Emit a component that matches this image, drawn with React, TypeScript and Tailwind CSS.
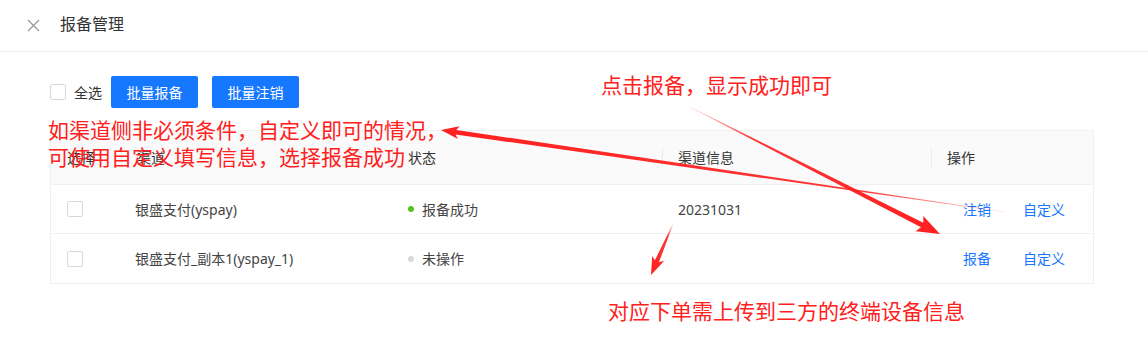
import React from "react";

type Pt = [number, number];

function arrowPoints(tail: Pt, tip: Pt, tw: number, sw: number, hl: number, hw: number) {
  const dx = tip[0] - tail[0];
  const dy = tip[1] - tail[1];
  const len = Math.hypot(dx, dy);
  const ux = dx / len;
  const uy = dy / len;
  const nx = -uy;
  const ny = ux;
  const bx = tip[0] - ux * hl;
  const by = tip[1] - uy * hl;
  const pts: Pt[] = [
    [tail[0] + (nx * tw) / 2, tail[1] + (ny * tw) / 2],
    [bx + (nx * sw) / 2, by + (ny * sw) / 2],
    [bx + (nx * hw) / 2 - ux * 3, by + (ny * hw) / 2 - uy * 3],
    [tip[0], tip[1]],
    [bx - (nx * hw) / 2 - ux * 3, by - (ny * hw) / 2 - uy * 3],
    [bx - (nx * sw) / 2, by - (ny * sw) / 2],
    [tail[0] - (nx * tw) / 2, tail[1] - (ny * tw) / 2],
  ];
  return pts.map((p) => `${p[0].toFixed(1)},${p[1].toFixed(1)}`).join(" ");
}

const arrows = [
  { id: "a1", tail: [1005, 212] as Pt, tip: [441, 130] as Pt, tw: 0.6, sw: 4.5, hl: 15, hw: 13 },
  { id: "a2", tail: [690, 107] as Pt, tip: [940, 234] as Pt, tw: 0.6, sw: 5, hl: 20, hw: 17 },
  { id: "a3", tail: [673, 224] as Pt, tip: [651, 275] as Pt, tw: 0.6, sw: 4.5, hl: 15, hw: 13 },
];

function Checkbox() {
  return <span className="inline-block w-4 h-4 border border-[#d9d9d9] rounded-[2px] bg-white shrink-0" />;
}

function Sep() {
  return <span className="absolute left-0 top-1/2 -translate-y-1/2 w-px h-[22px] bg-[#ececec]" />;
}

export default function App() {
  const rows = [
    { name: "银盛支付(yspay)", status: "报备成功", ok: true, info: "20231031", action: "注销" },
    { name: "银盛支付_副本1(yspay_1)", status: "未操作", ok: false, info: "", action: "报备" },
  ];
  return (
    <div
      className="relative w-[1148px] h-[358px] overflow-hidden bg-white text-[#333]"
      style={{ fontFamily: '"Noto Sans", "Noto Sans CJK SC", sans-serif' }}
    >
      {/* header */}
      <div className="h-[52px] border-b border-[#f0f0f0] flex items-center pl-[27px]">
        <svg width="13" height="13" viewBox="0 0 13 13" className="shrink-0">
          <path d="M1 1 L12 12 M12 1 L1 12" stroke="#999" strokeWidth="1.3" fill="none" />
        </svg>
        <span className="ml-[20px] text-[16px] leading-none text-[#333] -mt-[4px]">报备管理</span>
      </div>

      {/* toolbar */}
      <div className="pl-[50px] pt-[24px] flex items-center">
        <Checkbox />
        <span className="ml-2 text-[14px] text-[#333]">全选</span>
        <button className="ml-[9px] h-8 w-[87px] rounded-[2px] bg-[#1677ff] text-white text-[14px]">批量报备</button>
        <button className="ml-[14px] h-8 w-[87px] rounded-[2px] bg-[#1677ff] text-white text-[14px]">批量注销</button>
      </div>

      {/* table */}
      <div className="ml-[50px] mt-[22px] w-[1044px] border border-[#f0f0f0] text-[14px]">
        <div className="flex h-[54px] bg-[#fafafa] border-b border-[#f0f0f0] items-center text-[#333]">
          <div className="w-[70px] pl-4 relative">选择</div>
          <div className="w-[271px] pl-4 relative"><Sep />渠道</div>
          <div className="w-[270px] pl-4 relative"><Sep />状态</div>
          <div className="w-[269px] pl-4 relative"><Sep />渠道信息</div>
          <div className="flex-1 pl-4 relative"><Sep />操作</div>
        </div>
        {rows.map((r, i) => (
          <div key={i} className={`flex h-[49px] items-center ${i === 0 ? "border-b border-[#f0f0f0]" : ""}`}>
            <div className="w-[70px] pl-4 flex items-center"><Checkbox /></div>
            <div className="w-[271px] pl-[14px] text-[#444]">{r.name}</div>
            <div className="w-[270px] pl-4 flex items-center text-[#444]">
              <span className={`w-[6px] h-[6px] rounded-full ${r.ok ? "bg-[#52c41a]" : "bg-[#d9d9d9]"}`} />
              <span className="ml-2">{r.status}</span>
            </div>
            <div className="w-[269px] pl-4 text-[#444]">{r.info}</div>
            <div className="flex-1 pl-4 flex items-center text-[#1677ff]">
              <span className="px-4">{r.action}</span>
              <span className="px-4">自定义</span>
            </div>
          </div>
        ))}
      </div>

      {/* annotations */}
      <div
        className="absolute left-[48px] top-[116px] text-[21px] leading-[27px] text-[#ff2020] whitespace-nowrap"
        style={{ fontFamily: '"Noto Sans CJK SC", sans-serif' }}
      >
        <div>如渠道侧非必须条件，自定义即可的情况，</div>
        <div>可使用自定义填写信息，选择报备成功</div>
      </div>
      <div
        className="absolute left-[601px] top-[71px] text-[21px] leading-[27px] text-[#ff2020] whitespace-nowrap"
        style={{ fontFamily: '"Noto Sans CJK SC", sans-serif' }}
      >
        点击报备，显示成功即可
      </div>
      <div
        className="absolute left-[608px] top-[297px] text-[21px] leading-[27px] text-[#ff2020] whitespace-nowrap"
        style={{ fontFamily: '"Noto Sans CJK SC", sans-serif' }}
      >
        对应下单需上传到三方的终端设备信息
      </div>

      <svg className="absolute inset-0 pointer-events-none" width="1148" height="358">
        <defs>
          {arrows.map((a) => (
            <linearGradient
              key={a.id}
              id={`g-${a.id}`}
              gradientUnits="userSpaceOnUse"
              x1={a.tail[0]}
              y1={a.tail[1]}
              x2={a.tip[0]}
              y2={a.tip[1]}
            >
              <stop offset="0" stopColor="#ff2020" stopOpacity="0.15" />
              <stop offset="0.25" stopColor="#ff2020" stopOpacity="0.9" />
              <stop offset="1" stopColor="#ff2020" stopOpacity="1" />
            </linearGradient>
          ))}
        </defs>
        {arrows.map((a) => (
          <polygon key={a.id} points={arrowPoints(a.tail, a.tip, a.tw, a.sw, a.hl, a.hw)} fill={`url(#g-${a.id})`} />
        ))}
      </svg>
    </div>
  );
}
